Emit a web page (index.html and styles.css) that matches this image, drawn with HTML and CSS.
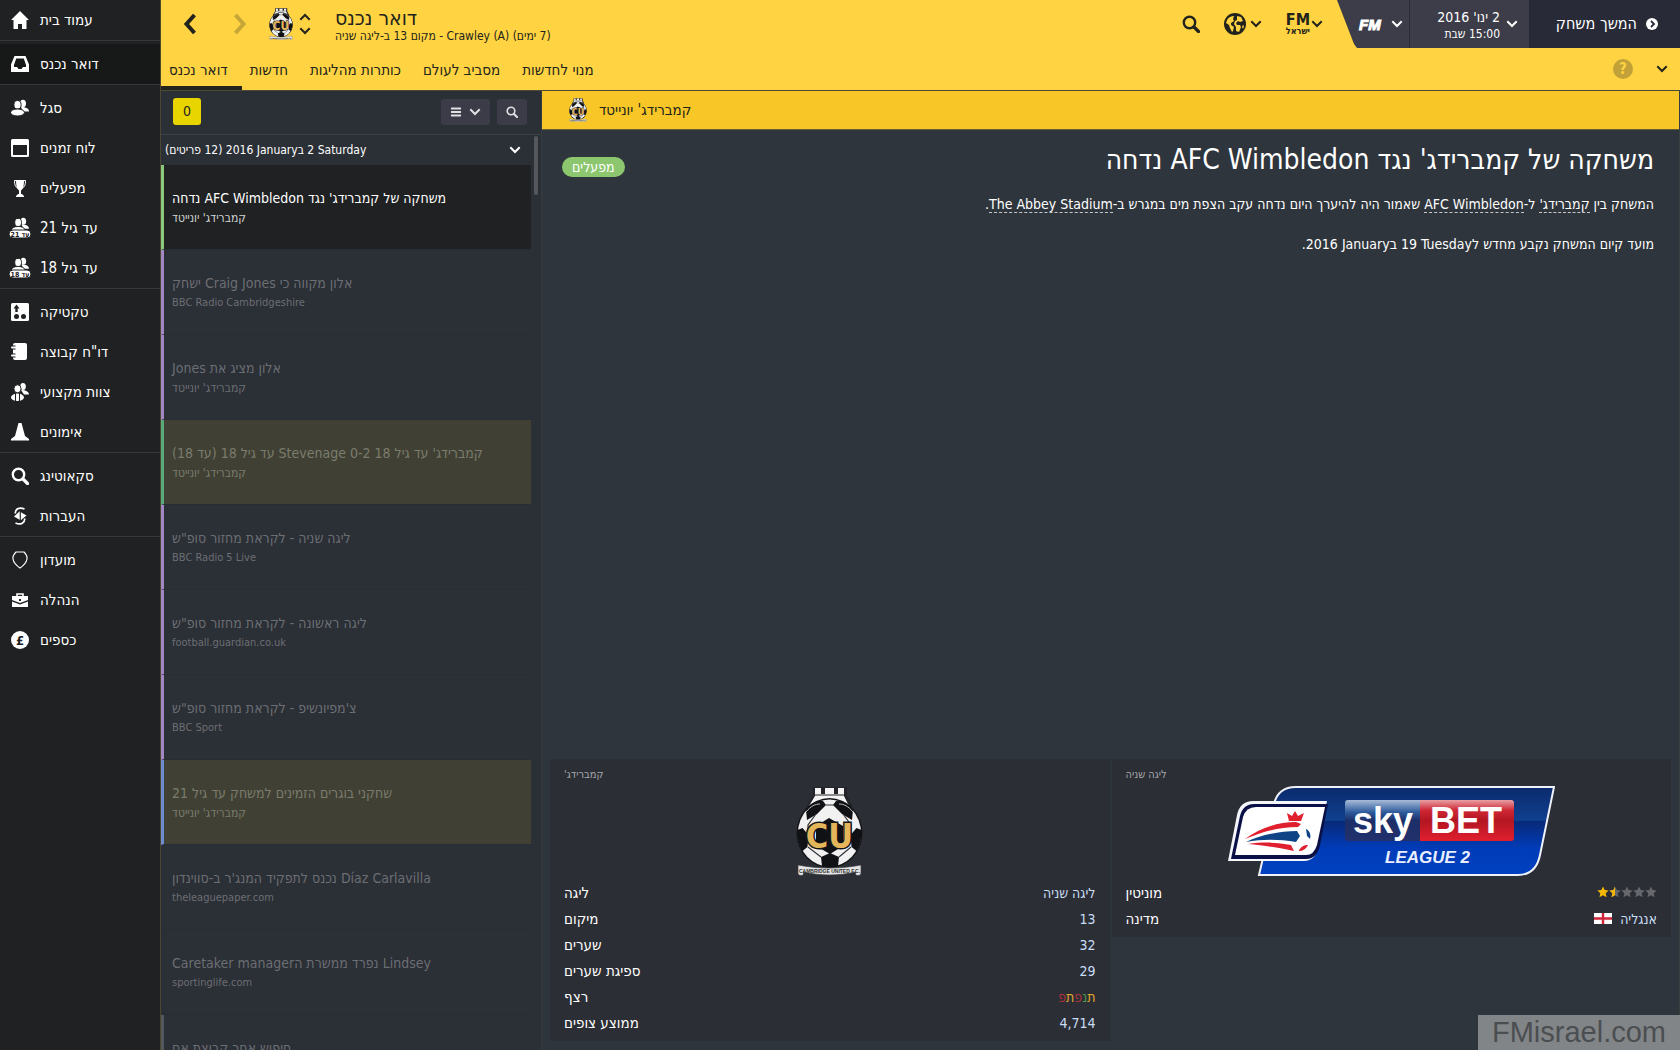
FILE: index.html
```html
<!DOCTYPE html>
<html lang="he">
<head>
    <meta charset="UTF-8">
    <title>דואר נכנס</title>
    <link rel="stylesheet" href="styles.css">
</head>
<body>

<!-- shared shapes -->
<svg class="defs" width="0" height="0">
    <symbol id="chevron" viewBox="0 0 12 8">
        <path d="M2 2l4 4 4-4" fill="none" stroke="currentColor" stroke-width="2" stroke-linecap="square"/>
    </symbol>
    <symbol id="search" viewBox="0 0 18 18">
        <circle cx="7.5" cy="7.5" r="5.7" fill="none" stroke="currentColor" stroke-width="2.4"/>
        <path d="M12 12l4.5 4.5" stroke="currentColor" stroke-width="3.2" stroke-linecap="round"/>
    </symbol>
    <symbol id="people" viewBox="0 0 18 18">
        <ellipse cx="12" cy="4.5" rx="3" ry="3.8"/>
        <path d="M10 8c5 0 8 1.500 8 4.500h-6z"/>
        <ellipse cx="6.500" cy="5.800" rx="3.600" ry="4.300" stroke="#1f2122"/>
        <ellipse cx="6.500" cy="13.500" rx="7" ry="3.500" stroke="#1f2122"/>
    </symbol>
    <symbol id="star" viewBox="0 0 12 12">
        <path d="M6 .5l1.700 3.600 3.900.5-2.900 2.700.8 3.900L6 9.300l-3.500 1.900.8-3.900L.4 4.600l3.900-.5z"/>
    </symbol>
    <symbol id="crest" viewBox="0 0 67 90">
        <path d="M17 1h34v8l6 12H10l7-12z" fill="#22242a"/>
        <path d="M19 2h6v6h4V2h9v6h4V2h6v8l5 10H13l6-10z" fill="#f4f4f4"/>
        <path d="M19 9h29" stroke="#222" stroke-width="1"/>
        <ellipse cx="33.500" cy="47" rx="33" ry="35" fill="#15161a"/>
        <ellipse cx="33.500" cy="47" rx="31.500" ry="33.500" fill="#f1f1f1"/>
        <path d="M10 24C15 17 21 14 27 15l3 4-9 9-10 6zM57 24C52 17 46 14 40 15l-3 4 9 9 10 6z" fill="#101114"/>
        <path d="M1.500 44l5-2 6 7-1 12-5 4C3 59 1 51 1.500 44zM65.500 44l-5-2-6 7 1 12 5 4c3.500-6 5.500-14 5-21z" fill="#101114"/>
        <path d="M25 71l9-4 9 4-1 9c-6 2-10 2-16 0zM20 40l13-8 14 8v20l-13 8-14-8z" fill="#101114"/>
        <path d="M30 19h8M20 28l-8 11v10M47 28l8 11v10M12 61l13 10M55 61L43 71" fill="none" stroke="#33343a" stroke-width="1.200"/>
        <path d="M10 26c5-6 9-8 14-8M57 26c-5-6-9-8-14-8" fill="none" stroke="#bbb" stroke-width="1"/>
        <text class="crest-letters" x="33.500" y="62" text-anchor="middle">CU</text>
        <path d="M2 79c20 4 43 4 63 0v9c-3 3-7 1-5-2-18 4-35 4-53 0 2 3-2 5-5 2z" fill="#e4e4e4" stroke="#3a3b40" stroke-width=".7"/>
        <text class="crest-ribbon" x="33.500" y="87" text-anchor="middle">CAMBRIDGE UNITED F.C.</text>
    </symbol>
</svg>

<aside class="sidebar">
    <nav>
        <div class="group">
            <a href="#"><svg viewBox="0 0 18 18"><path d="M9 0L0 9h2.500v9H7v-5h4v5h4.500V9H18z"/></svg><span>עמוד בית</span></a>
        </div>
        <div class="group">
            <a href="#" class="active"><svg viewBox="0 0 18 18"><path fill-rule="evenodd" d="M3.500 1h11L18 9.500V17H0V9.500zM5.200 3.500L3 10v2h3l1.500 2h3l1.500-2h3v-2l-2.200-6.500z"/></svg><span>דואר נכנס</span></a>
        </div>
        <div class="group">
            <a href="#"><svg><use href="#people"/></svg><span>סגל</span></a>
            <a href="#"><svg viewBox="0 0 18 18"><path fill-rule="evenodd" d="M1.500 0h15Q18 0 18 1.500v15q0 1.500-1.500 1.500h-15Q0 18 0 16.500v-15Q0 0 1.500 0zM2 6v10h14V6z"/></svg><span>לוח זמנים</span></a>
            <a href="#"><svg viewBox="0 0 18 18"><path d="M5 1h8c0 6-1 9-3 10.500V15h1l2 2v1H5v-1l2-2h1v-3.500C6 10 5 7 5 1z"/><path d="M6 1.500H3.500c0 4 .5 6 3.500 8M12 1.500h2.500c0 4-.5 6-3.500 8" fill="none" stroke="#fff"/></svg><span>מפעלים</span></a>
            <a href="#"><svg class="tall" viewBox="0 0 22 22"><use href="#people" x="3" y="0" width="17" height="17"/><rect class="tag" x="0" y="13" width="22" height="8" rx="4"/><text class="tag-text" x="11" y="20" text-anchor="middle">עד 21</text></svg><span>עד גיל 21</span></a>
            <a href="#"><svg class="tall" viewBox="0 0 22 22"><use href="#people" x="3" y="0" width="17" height="17"/><rect class="tag" x="0" y="13" width="22" height="8" rx="4"/><text class="tag-text" x="11" y="20" text-anchor="middle">עד 18</text></svg><span>עד גיל 18</span></a>
        </div>
        <div class="group">
            <a href="#"><svg viewBox="0 0 18 18"><rect width="18" height="18" rx="1.500"/><path d="M5.500 1.500l3 4H6.700V9H4.300V5.500H2.500z" fill="#1f2122"/><circle cx="5.500" cy="13.500" r="2.500" fill="#1f2122"/><circle cx="12.500" cy="13.500" r="2.500" fill="#1f2122"/></svg><span>טקטיקה</span></a>
            <a href="#"><svg viewBox="0 0 18 18"><path d="M4 0h10q2 0 2 2v13q0 2-2 2H4q-2 0-2-2V2q0-2 2-2z"/><path d="M0 4.500h4.500M0 12.500h4.500" stroke="#1f2122" stroke-width="4"/><path d="M1 4.500h4M1 12.500h4" stroke="#fff" stroke-width="2" stroke-linecap="round"/></svg><span>דו"ח קבוצה</span></a>
            <a href="#"><svg viewBox="0 0 18 18"><ellipse cx="12" cy="3.500" rx="2.800" ry="3.500"/><path d="M10 7c5 0 8 2 8 4.500h-5z"/><ellipse cx="6.500" cy="5.800" rx="3.600" ry="4" stroke="#1f2122"/><ellipse cx="6.500" cy="14.300" rx="6.500" ry="3.700"/><path d="M4.500 10v8M8.500 10v8" stroke="#1f2122"/></svg><span>צוות מקצועי</span></a>
            <a href="#"><svg viewBox="0 0 18 18"><path d="M7.500 0h3l3.500 13 4 3v1.500H0V16l4-3z"/></svg><span>אימונים</span></a>
        </div>
        <div class="group">
            <a href="#"><svg><use href="#search"/></svg><span>סקאוטינג</span></a>
            <a href="#"><svg viewBox="0 0 18 18"><path d="M13.500 2C8-.5 4 2.500 4.300 6.500M4.500 16c5.500 2.500 9.500-.5 9.200-4.500" fill="none" stroke="#fff" stroke-width="1.700"/><path d="M9 4v9L3 9.500zM9.500 5l6 3.500-6 5z"/><path d="M9.200 3v11" stroke="#1f2122"/></svg><span>העברות</span></a>
        </div>
        <div class="group">
            <a href="#"><svg viewBox="0 0 18 18"><path d="M5 1h8c2 2 3.500 4 3 7-.7 4-4 7-7 9-3-2-6.300-5-7-9-.5-3 1-5 3-7z" fill="none" stroke="#fff" stroke-width="1.200"/></svg><span>מועדון</span></a>
            <a href="#"><svg viewBox="0 0 18 18"><path d="M6 5V3h6v2" fill="none" stroke="#fff" stroke-width="1.600"/><path d="M1 5h16v4l-8 3-8-3zM1 10.500l8 3 8-3V16H1z"/><path d="M8 8h2v2H8z" fill="#1f2122"/></svg><span>הנהלה</span></a>
            <a href="#"><svg viewBox="0 0 18 18"><circle cx="9" cy="9" r="9"/><text class="pound" x="9" y="13.500" text-anchor="middle">£</text></svg><span>כספים</span></a>
        </div>
    </nav>
</aside>

<div class="screen">
    <header class="header">
        <div class="topbar">
            <button class="nav-btn" aria-label="אחורה"><svg width="14" height="22" viewBox="0 0 14 22"><path d="M11.500 2l-8 9 8 9" fill="none" stroke="currentColor" stroke-width="4"/></svg></button>
            <button class="nav-btn forward" aria-label="קדימה"><svg width="14" height="22" viewBox="0 0 14 22"><path d="M2.500 2l8 9-8 9" fill="none" stroke="currentColor" stroke-width="4"/></svg></button>
            <div class="club">
                <svg width="24" height="32"><use href="#crest"/></svg>
                <button class="updown" aria-label="החלף קבוצה">
                    <svg class="flip" width="12" height="8"><use href="#chevron"/></svg>
                    <svg width="12" height="8"><use href="#chevron"/></svg>
                </button>
            </div>
            <div class="titles" dir="rtl">
                <h1>דואר נכנס</h1>
                <p>(7 ימים) Crawley (A) - מקום 13 ב-ליגה שניה</p>
            </div>
            <div class="tools">
                <button aria-label="חיפוש"><svg width="18" height="18"><use href="#search"/></svg></button>
                <button aria-label="עולם">
                    <svg width="22" height="22" viewBox="0 0 22 22"><circle cx="11" cy="11" r="11" fill="#22231c"/><path d="M3 7c2-3 4-4 7-4l-1 3 1 2-3 2v2l3 2-1 4-1 1-2-4-1-3-3-2zM13 3l4 1 2 4-3 1-2-1-2 2 1 2h3l1 2-2 5-3-1v-4l-2-3 1-3 2-1zM19 12l1 1-1 3-1-2z" fill="#ffd341"/></svg>
                    <svg width="12" height="8"><use href="#chevron"/></svg>
                </button>
                <button class="fm-il" aria-label="FM ישראל">
                    <span><b>FM</b><small>ישראל</small></span>
                    <svg width="12" height="8"><use href="#chevron"/></svg>
                </button>
            </div>
            <div class="game-menu">
                <button class="fm-menu"><b>FM</b><svg width="12" height="8"><use href="#chevron"/></svg></button>
                <button class="date">
                    <span dir="rtl"><span>2 ינו' 2016</span><small>15:00 שבת</small></span>
                    <svg width="12" height="8"><use href="#chevron"/></svg>
                </button>
                <button class="continue">
                    <span>המשך משחק</span>
                    <svg width="12" height="12" viewBox="0 0 12 12"><circle cx="6" cy="6" r="6" fill="#fff"/><path d="M5 3l3 3-3 3" fill="none" stroke="#282a38" stroke-width="1.800"/></svg>
                </button>
            </div>
        </div>
        <nav class="tabs">
            <a href="#" class="active">דואר נכנס</a>
            <a href="#">חדשות</a>
            <a href="#">כותרות מהליגות</a>
            <a href="#">מסביב לעולם</a>
            <a href="#">מנוי לחדשות</a>
            <div class="tab-tools">
                <button class="help">?</button>
                <button aria-label="עוד"><svg width="12" height="8"><use href="#chevron"/></svg></button>
            </div>
        </nav>
    </header>

    <div class="columns">
        <section class="inbox">
            <div class="inbox-bar">
                <span class="count">0</span>
                <button class="dark-btn" aria-label="סינון">
                    <svg width="12" height="10" viewBox="0 0 12 10"><path d="M1 1.500h10M1 5h10M1 8.500h10" stroke="currentColor" stroke-width="2"/></svg>
                    <svg width="12" height="8"><use href="#chevron"/></svg>
                </button>
                <button class="dark-btn" aria-label="חיפוש"><svg width="12" height="12"><use href="#search"/></svg></button>
            </div>
            <div class="scroller">
                <div class="messages">
                    <button class="day"><span dir="rtl">Saturday&rlm; 2 בJanuary&rlm; 2016 (12 פריטים)</span><svg width="12" height="8"><use href="#chevron"/></svg></button>
                    <a href="#" class="msg selected green" dir="rtl"><strong>משחקה של קמברידג' נגד AFC Wimbledon נדחה</strong><small>קמברידג' יונייטד</small></a>
                    <a href="#" class="msg purple" dir="rtl"><strong>אלון מקווה כי Craig Jones ישחק</strong><small lang="en">BBC Radio Cambridgeshire</small></a>
                    <a href="#" class="msg purple" dir="rtl"><strong>אלון מציג את Jones</strong><small>קמברידג' יונייטד</small></a>
                    <a href="#" class="msg marked teal" dir="rtl"><strong>קמברידג' עד גיל 18&rlm; <bdi>0-2</bdi> &rlm;Stevenage עד גיל 18 (עד 18)</strong><small>קמברידג' יונייטד</small></a>
                    <a href="#" class="msg purple" dir="rtl"><strong>ליגה שניה - לקראת מחזור סופ"ש</strong><small lang="en">BBC Radio 5 Live</small></a>
                    <a href="#" class="msg purple" dir="rtl"><strong>ליגה ראשונה - לקראת מחזור סופ"ש</strong><small lang="en">football.guardian.co.uk</small></a>
                    <a href="#" class="msg purple" dir="rtl"><strong>צ'מפיונשיפ - לקראת מחזור סופ"ש</strong><small lang="en">BBC Sport</small></a>
                    <a href="#" class="msg marked blue" dir="rtl"><strong>שחקני בוגרים הזמינים למשחק עד גיל 21</strong><small>קמברידג' יונייטד</small></a>
                    <a href="#" class="msg" dir="rtl"><strong>Díaz Carlavilla נכנס לתפקיד המנג'ר ב-סווינדון</strong><small lang="en">theleaguepaper.com</small></a>
                    <a href="#" class="msg" dir="rtl"><strong>Lindsey נפרד ממשרת הCaretaker manager</strong><small lang="en">sportinglife.com</small></a>
                    <a href="#" class="msg gray" dir="rtl"><strong>חיפוש אחר קבוצת אם</strong><small>&nbsp;</small></a>
                </div>
                <div class="track"><div class="thumb"></div></div>
            </div>
        </section>

        <main class="article">
            <div class="club-bar">
                <svg width="18" height="24"><use href="#crest"/></svg>
                <span>קמברידג' יונייטד</span>
            </div>
            <div class="story">
                <span class="pill">מפעלים</span>
                <div class="text" dir="rtl">
                    <h2>משחקה של קמברידג' נגד AFC Wimbledon נדחה</h2>
                    <p>המשחק בין <a href="#">קמברידג'</a> ל-<a href="#">AFC Wimbledon</a> שאמור היה להיערך היום נדחה עקב הצפת מים במגרש ב-<a href="#">The Abbey Stadium</a>.</p>
                    <p>מועד קיום המשחק נקבע מחדש לTuesday&rlm; 19 בJanuary&rlm; 2016.</p>
                </div>
            </div>

            <div class="cards">
                <section class="card">
                    <h3 dir="rtl">קמברידג'</h3>
                    <svg class="logo" width="67" height="90"><use href="#crest"/></svg>
                    <table>
                        <tr><th>ליגה</th><td>ליגה שניה</td></tr>
                        <tr><th>מיקום</th><td>13</td></tr>
                        <tr><th>שערים</th><td>32</td></tr>
                        <tr><th>ספיגת שערים</th><td>29</td></tr>
                        <tr><th>רצף</th><td dir="rtl"><span class="draw">ת</span><span class="win">נ</span><span class="loss">פ</span><span class="draw">ת</span><span class="loss">פ</span></td></tr>
                        <tr><th>ממוצע צופים</th><td>4,714</td></tr>
                    </table>
                </section>
                <section class="card">
                    <h3 dir="rtl">ליגה שניה</h3>
                    <svg class="logo" width="327" height="90" viewBox="0 0 327 90">
                        <defs>
                            <linearGradient id="blue" x1="0" y1="0" x2="0" y2="1">
                                <stop offset="0" stop-color="#0b2a6c"/>
                                <stop offset=".38" stop-color="#10408f"/>
                                <stop offset=".39" stop-color="#082a78"/>
                                <stop offset=".7" stop-color="#003cb8"/>
                                <stop offset="1" stop-color="#0040c0"/>
                            </linearGradient>
                            <linearGradient id="red" x1="0" y1="0" x2="0" y2="1">
                                <stop offset="0" stop-color="#e8a0a4"/>
                                <stop offset=".25" stop-color="#cf2735"/>
                                <stop offset=".5" stop-color="#b31622"/>
                                <stop offset="1" stop-color="#e01f2f"/>
                            </linearGradient>
                            <linearGradient id="navy" x1="0" y1="0" x2="0" y2="1">
                                <stop offset="0" stop-color="#a8bcd8"/>
                                <stop offset=".3" stop-color="#2d5a9c"/>
                                <stop offset=".5" stop-color="#1c2f68"/>
                                <stop offset="1" stop-color="#22306c"/>
                            </linearGradient>
                        </defs>
                        <path d="M46 18Q50 1 68 1H326L312 69Q308 89 290 89H31L35 72z" fill="url(#blue)" stroke="#eef1f8" stroke-width="2"/>
                        <path d="M0 75L9 29Q12 15 25 15H99L91 59Q88 75 76 75z" fill="#f4f6fb"/>
                        <path d="M3 73L12 30Q15 18 26 18H100L92 59Q89 73 78 73z" fill="#0a0f45"/>
                        <path d="M7 69L15 31Q18 21 28 21H97L89 59Q86 69 78 69z" fill="#fff"/>
                        <path d="M61 35l-2-8 5 3 3-5 3 5 6-3-3 8z" fill="#e01f2f"/>
                        <path d="M17 53C32 42 50 36 68 36l5 2-3 3C50 41 33 46 17 53z" fill="#e01f2f"/>
                        <path d="M18 56c15-7 34-11 51-11l3 5-4 6c-17-3-34-3-50 0z" fill="#0e4486"/>
                        <path d="M20 58c14-2 30-2 43 1l3 6C51 62 35 59 20 58z" fill="#e01f2f"/>
                        <path d="M78 43c4 2 5 6 4 10l-3-3z" fill="#0e4486"/>
                        <path d="M71 64c3-4 5-5 9-5-2 4-5 6-9 6z" fill="#e01f2f"/>
                        <path d="M120 14h72v41h-72q-3 0-3-3V17q0-3 3-3z" fill="url(#navy)"/>
                        <path d="M192 14h91q3 0 3 3v35q0 3-3 3h-91z" fill="url(#red)"/>
                        <text class="sponsor" x="125" y="47">sky</text>
                        <text class="sponsor" x="202" y="47">BET</text>
                        <text class="division" x="157" y="77">LEAGUE 2</text>
                    </svg>
                    <table>
                        <tr><th>מוניטין</th><td class="stars">
                            <svg class="gold" width="12" height="12"><use href="#star"/></svg><svg width="12" height="12"><use href="#star"/><svg class="gold" width="6" height="12" viewBox="0 0 6 12"><use href="#star" width="12" height="12"/></svg></svg><svg width="12" height="12"><use href="#star"/></svg><svg width="12" height="12"><use href="#star"/></svg><svg width="12" height="12"><use href="#star"/></svg>
                        </td></tr>
                        <tr><th>מדינה</th><td><svg class="flag" width="18" height="11" viewBox="0 0 18 11"><path d="M0 0h18v11H0z" fill="#fff"/><path d="M0 5.500h18M9 0v11" stroke="#d0243a" stroke-width="2.400"/></svg>אנגליה</td></tr>
                    </table>
                </section>
            </div>
        </main>
    </div>
</div>

<div class="watermark">FMisrael.com</div>

</body>
</html>
```
FILE: styles.css
```css
* {
    box-sizing: border-box;
}
body {
    margin: 0;
    height: 100vh;
    display: flex;
    overflow: hidden;
    background: #2f353c;
    color: #fff;
    font: 14px/20px "DejaVu Sans Condensed", "DejaVu Sans", sans-serif;
}
a {
    color: inherit;
    text-decoration: none;
}
button {
    display: flex;
    align-items: center;
    background: none;
    border: 0;
    padding: 0;
    color: inherit;
    font: inherit;
    cursor: pointer;
}
h1, h2, h3, p {
    margin: 0;
    font-weight: normal;
}
svg {
    display: block;
    flex: none;
}
.defs {
    display: none;
}

/* sidebar */
.sidebar {
    width: 160px;
    flex: none;
    background: #1f2122;
}
.group {
    padding-top: 3px;
    border-bottom: 1px solid #36383a;
}
.group:first-child {
    padding-top: 0;
}
.group:last-child {
    border-bottom: 0;
}
.group a {
    display: flex;
    align-items: center;
    gap: 11px;
    height: 40px;
    padding-left: 11px;
    font-size: 15px;
}
.group a.active {
    background: #171918;
}
.group svg {
    width: 18px;
    height: 18px;
    fill: #fff;
}
.group svg.tall {
    width: 22px;
    height: 22px;
    margin: 0 -2px;
}
.tag {
    stroke: #1f2122;
}
.tag-text {
    font: bold 7px "DejaVu Sans Condensed", sans-serif;
    fill: #1f2122;
}
.pound {
    font: bold 13px "DejaVu Sans Condensed", sans-serif;
    fill: #1f2122;
}

/* header */
.screen {
    flex: 1;
    min-width: 0;
    display: flex;
    flex-direction: column;
    border-left: 1px solid #4a4630;
}
.header {
    background: #ffd341;
    color: #22231c;
    border-bottom: 1px solid #4c4a35;
}
.topbar {
    display: flex;
    align-items: center;
    height: 48px;
}
.nav-btn {
    margin-left: 22px;
}
.nav-btn.forward {
    margin-left: 36px;
    opacity: .25;
}
.club {
    display: flex;
    align-items: center;
    gap: 6px;
    margin-left: 22px;
}
.updown {
    flex-direction: column;
    gap: 6px;
}
.flip {
    transform: scaleY(-1);
}
.titles {
    margin-left: 24px;
    padding-top: 4px;
    text-align: left;
}
.titles h1 {
    font-size: 21px;
    line-height: 20px;
}
.titles p {
    font-size: 12px;
    line-height: 16px;
}
.tools {
    display: flex;
    align-items: center;
    gap: 24px;
    margin-left: auto;
    margin-right: 14px;
}
.tools button {
    gap: 4px;
}
.tools .fm-il {
    gap: 1px;
}
.fm-il span {
    display: flex;
    flex-direction: column;
    align-items: center;
}
.fm-il b {
    font-size: 16px;
    line-height: 14px;
}
.fm-il small {
    font-size: 9px;
    font-weight: bold;
    line-height: 9px;
}
.game-menu {
    display: flex;
    align-self: stretch;
    background: #3c3d49;
    color: #fff;
    clip-path: polygon(0 0, 100% 0, 100% 100%, 20px 100%, 17px 44px);
}
.fm-menu {
    width: 73px;
    padding-left: 22px;
    gap: 10px;
    border-right: 1px solid #282a35;
}
.fm-menu b {
    font: italic bold 15px "Liberation Sans", sans-serif;
    -webkit-text-stroke: 1px #fff;
}
.date {
    width: 119px;
    justify-content: flex-end;
    gap: 6px;
    padding-right: 11px;
}
.date span {
    display: block;
    padding-top: 1px;
    text-align: right;
    line-height: 16px;
}
.date small {
    font-size: 12px;
}
.continue {
    width: 151px;
    justify-content: flex-end;
    gap: 9px;
    padding-right: 22px;
    background: #282a38;
    font-size: 16px;
}
.tabs {
    display: flex;
    height: 42px;
    font-size: 15px;
}
.tabs a {
    padding: 12px 14px 0 8px;
}
.tabs a.active {
    border-bottom: 4px solid #22231c;
}
.tab-tools {
    display: flex;
    align-items: center;
    gap: 23px;
    margin-left: auto;
    padding-right: 12px;
}
.help {
    width: 20px;
    height: 20px;
    justify-content: center;
    border-radius: 50%;
    background: #c1a138;
    color: #ffd341;
    font-weight: bold;
}

/* inbox */
.columns {
    flex: 1;
    min-height: 0;
    display: flex;
}
.inbox {
    width: 381px;
    flex: none;
    display: flex;
    flex-direction: column;
    background: #2b2f36;
    border-right: 1px solid #333a41;
}
.inbox-bar {
    display: flex;
    align-items: center;
    gap: 7px;
    height: 44px;
    padding: 0 14px 2px 12px;
    border-bottom: 1px solid #3d4146;
}
.count {
    width: 28px;
    margin-right: auto;
    border-radius: 3px;
    background: #e8d500;
    color: #22231c;
    line-height: 27px;
    text-align: center;
}
.dark-btn {
    height: 26px;
    padding: 0 9px;
    gap: 7px;
    border-radius: 3px;
    background: #3b3c48;
    color: #dfe0e2;
}
.scroller {
    flex: 1;
    min-height: 0;
    display: flex;
    overflow: hidden;
}
.messages {
    flex: 1;
}
.day {
    width: 100%;
    height: 30px;
    justify-content: space-between;
    padding: 0 10px 0 4px;
    font-size: 12px;
    color: #fff;
}
.msg {
    display: flex;
    flex-direction: column;
    justify-content: center;
    height: 85px;
    padding: 2px 0 0 8px;
    border-left: 3px solid #2b2f36;
    border-bottom: 1px solid #292d33;
    color: #6b6e73;
    text-align: left;
}
.msg strong {
    font-weight: normal;
    white-space: nowrap;
}
.msg small {
    font-size: 12px;
}
.msg small:lang(en) {
    font-size: 11px;
}
.msg.selected {
    background: #1f2122;
    color: #fff;
}
.msg.selected small {
    color: #d3d4d4;
}
.msg.marked {
    background: #404134;
    color: #7b7c6d;
}
.msg.green { border-left-color: #8dc77b; }
.msg.purple { border-left-color: #a287c2; }
.msg.teal { border-left-color: #5aa97a; }
.msg.blue { border-left-color: #6f8bd0; }
.msg.gray { border-left-color: #54575b; }
.track {
    width: 10px;
    padding: 1px 3px;
}
.thumb {
    height: 59px;
    border-radius: 2px;
    background: #54585d;
}

/* article */
.article {
    flex: 1;
    min-width: 0;
    display: flex;
    flex-direction: column;
    border-right: 1px solid #3a3f40;
}
.club-bar {
    display: flex;
    align-items: center;
    gap: 12px;
    height: 39px;
    padding-left: 27px;
    background: #f8c727;
    border-bottom: 1px solid #6a5f30;
    color: #22231c;
    font-size: 15px;
}
.story {
    display: flex;
    justify-content: space-between;
    align-items: flex-start;
    padding: 12px 25px 0 20px;
}
.pill {
    margin-top: 15px;
    padding: 0 10px;
    border-radius: 10px;
    background: #8cc66f;
}
.text h2 {
    font-size: 28px;
    line-height: 36px;
    margin-bottom: 16px;
}
.text p {
    margin-bottom: 20px;
}
.text a {
    border-bottom: 1px dashed #c5c8cb;
}
.cards {
    display: flex;
    align-items: flex-start;
    gap: 2px;
    margin-top: auto;
    padding: 0 8px 9px;
}
.card {
    flex: 1;
    padding: 7px 14px 5px;
    background: #2c2e35;
}
.card h3 {
    color: #a5a7ab;
    font-size: 11px;
    line-height: 18px;
    text-align: left;
}
.logo {
    margin: 2px auto 4px;
}
.card table {
    width: 100%;
    border-collapse: collapse;
}
.card th {
    padding: 3px 0;
    font-size: 15px;
    font-weight: normal;
    text-align: left;
}
.card td {
    padding: 3px 0;
    color: #c9ddf5;
    text-align: right;
}
.card td svg {
    display: inline-block;
}
.draw { color: #e0a72e; }
.win { color: #4c9a4e; }
.loss { color: #a8323a; }
.stars svg {
    fill: #66686e;
}
.stars svg.gold {
    fill: #f5b800;
}
.flag {
    margin-right: 8px;
}
.crest-letters {
    font: bold 34px "DejaVu Sans Condensed", sans-serif;
    fill: #e5b55a;
    stroke: #15161a;
    stroke-width: 3px;
    paint-order: stroke;
}
.crest-ribbon {
    font: bold 5px "Liberation Sans", sans-serif;
    fill: #333;
}
.sponsor {
    font: bold 36px "Liberation Sans", sans-serif;
    fill: #fff;
}
.division {
    font: italic bold 17px "Liberation Sans", sans-serif;
    fill: #e9efff;
}

.watermark {
    position: fixed;
    right: 0;
    bottom: 0;
    padding: 0 14px;
    background: #828587;
    color: #4b4e51;
    font: 29px/35px "Liberation Sans", sans-serif;
}
```
